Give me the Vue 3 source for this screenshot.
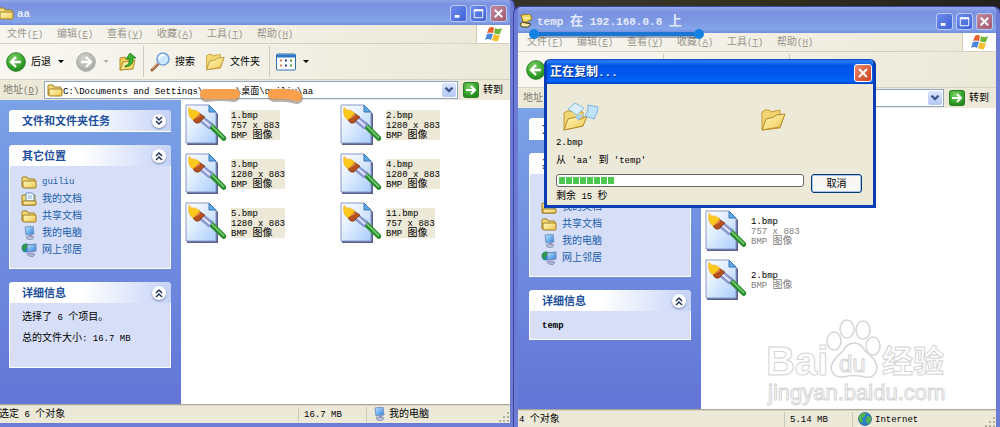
<template>
  <div class="desktop">
    <svg class="sprite" aria-hidden="true">
      <defs>
        <linearGradient id="gPage" x1="0" y1="0" x2="1" y2="1">
          <stop offset="0" stop-color="#ffffff" /><stop offset="0.4" stop-color="#e3effe" /><stop offset="1" stop-color="#a9cdfb" />
        </linearGradient>
        <linearGradient id="gFolder" x1="0" y1="0" x2="1" y2="1">
          <stop offset="0" stop-color="#fff9c0" /><stop offset="1" stop-color="#eec84e" />
        </linearGradient>
        <radialGradient id="gGreen" cx="0.4" cy="0.3" r="0.8">
          <stop offset="0" stop-color="#7fd26a" /><stop offset="0.6" stop-color="#36a32c" /><stop offset="1" stop-color="#1f7d1a" />
        </radialGradient>
        <radialGradient id="gGrey" cx="0.4" cy="0.3" r="0.8">
          <stop offset="0" stop-color="#d4d4d0" /><stop offset="1" stop-color="#a2a29e" />
        </radialGradient>
        <linearGradient id="gScreen" x1="0" y1="0" x2="1" y2="1">
          <stop offset="0" stop-color="#bfeaff" /><stop offset="1" stop-color="#2c7fe0" />
        </linearGradient>
      </defs>
      <symbol id="i-bmp" viewBox="0 0 42 42">
        <path d="M2 2H25L33 10V41H2Z" fill="#59608c" />
        <path d="M1 1H24L31 8V39H1Z" fill="url(#gPage)" stroke="#8798c6" />
        <path d="M24 1V8H31Z" fill="#5cabe8" stroke="#3d74b4" />
        <path d="M22 22L26 18L41 33Q42 37 38 37Z" fill="#2b8c2e" />
        <path d="M26 21L39 34" stroke="#7fd07a" stroke-width="1.5" />
        <path d="M14 17L19 13L28 20L24 25Z" fill="#8d9bd4" stroke="#6c76b4" stroke-width="0.5" />
        <path d="M17 15L25 22" stroke="#e6ebff" stroke-width="1.8" />
        <path d="M8 15L14 9L20 13L14 19Q9 20 8 15Z" fill="#b4501e" stroke="#6e2a0c" stroke-width="0.6" />
        <path d="M10 14L15 11" stroke="#e08a50" stroke-width="1.5" />
        <path d="M4 3Q6 7 10 6L15 9L8 16Q2 12 4 3Z" fill="#fbc81c" stroke="#e8a012" stroke-width="0.5" />
      </symbol>
      <symbol id="i-folder" viewBox="0 0 16 14">
        <path d="M1 12V3Q1 2 2 2H6L7 4H13Q14 4 14 5V12Z" fill="#f5dc7a" stroke="#a07c1e" />
        <path d="M3 6H15V12Q15 13 14 13H3Q2 13 2 12V7Q2 6 3 6Z" fill="url(#gFolder)" stroke="#a07c1e" />
      </symbol>
      <symbol id="i-docs" viewBox="0 0 16 14">
        <path d="M1 13V4Q1 3 2 3H14V13Z" fill="#f3d772" stroke="#a07c1e" />
        <path d="M5 1H11L13 3V9H5Z" fill="#f4faff" stroke="#6590bd" />
        <path d="M7 4H11M7 6H11" stroke="#86b0dc" />
        <path d="M2 9H15V13H2Z" fill="url(#gFolder)" stroke="#a07c1e" />
      </symbol>
      <symbol id="i-pc" viewBox="0 0 16 14">
        <path d="M4 1L12 0L13 8L5 9Z" fill="url(#gScreen)" stroke="#7c93bd" />
        <path d="M8 9L11 9L12 11L8 11Z" fill="#8b93b8" />
        <path d="M5 11Q9 9 13 11Q13 13 9 14Q5 13 5 11Z" fill="#b9bfdb" stroke="#7279a2" stroke-width="0.6" />
      </symbol>
      <symbol id="i-net" viewBox="0 0 16 14">
        <circle cx="5" cy="5" r="4.5" fill="#2f86d2" />
        <path d="M1 4Q3 0 7 1L6 4L4 6L5 9Q1 8 1 4Z" fill="#2d9a3a" />
        <path d="M6 2L15 1V8L7 9Z" fill="url(#gScreen)" stroke="#6e86b5" />
        <path d="M6 11Q10 9 14 11Q13 14 10 14Q7 13 6 11Z" fill="#b0b6d6" stroke="#6e759e" stroke-width="0.6" />
      </symbol>
      <symbol id="i-globe" viewBox="0 0 16 14">
        <circle cx="8" cy="7" r="6.5" fill="#2b7fcc" stroke="#1d4f7e" stroke-width="0.6" />
        <path d="M3 3Q6 0 9 1L8 4L5 6L6 9L4 11Q0 7 3 3ZM10 4L14 5Q15 9 11 12L9 9Z" fill="#56b24b" />
      </symbol>
      <symbol id="i-share" viewBox="0 0 16 14">
        <path d="M3 1L12 0L14 5L9 8H5Z" fill="#f6dc5c" stroke="#94701a" />
        <path d="M2 10Q4 7 8 9L13 10L10 13H4Z" fill="#fbe9a8" stroke="#4b3a10" />
        <path d="M5 4H12" stroke="#fff8c8" />
      </symbol>
      <symbol id="i-back" viewBox="0 0 20 20">
        <circle cx="10" cy="10" r="9.3" fill="url(#gGreen)" stroke="#2a8524" />
        <path d="M10 5L5 10L10 15M5 10H15" fill="none" stroke="#fff" stroke-width="2.4" />
      </symbol>
      <symbol id="i-next" viewBox="0 0 20 20">
        <circle cx="10" cy="10" r="9.3" fill="url(#gGrey)" stroke="#a8a8a4" />
        <path d="M10 5L15 10L10 15M15 10H5" fill="none" stroke="#fff" stroke-width="2.4" />
      </symbol>
      <symbol id="i-up" viewBox="0 0 18 20">
        <path d="M1 18V6L6 5L7 7L13 6V16Z" fill="#eccb5c" stroke="#b08c2c" />
        <path d="M1 18L4 10L16 8L14 17Z" fill="url(#gFolder)" stroke="#b08c2c" />
        <path d="M6 14Q11 13 10 7H7L11 1L17 6H14Q15 14 6 15Z" fill="#3bb131" stroke="#1f7c1b" stroke-width="0.8" />
      </symbol>
      <symbol id="i-search" viewBox="0 0 20 20">
        <path d="M2 18L9 11" stroke="#a0643c" stroke-width="3" stroke-linecap="round" />
        <path d="M2 17L8 11" stroke="#e8b68c" stroke-width="1" />
        <circle cx="13" cy="7" r="6" fill="#c9e8fc" stroke="#7aa4d8" stroke-width="1.6" />
        <path d="M9 7Q10 3 14 3" fill="none" stroke="#fff" stroke-width="1.8" />
      </symbol>
      <symbol id="i-open" viewBox="0 0 26 24">
        <path d="M2 22V4L5 2H9L11 4L20 2V8H24L20 20Z" fill="#f2d671" stroke="#c69a35" />
        <path d="M2 22L6 11L14 9L16 7L25 6L20 19Z" fill="url(#gFolder)" stroke="#b38a2a" />
      </symbol>
      <symbol id="i-copy" viewBox="0 0 36 30">
        <path d="M1 28V11L4 9L20 10V24Z" fill="#f2d671" stroke="#c69a35" />
        <path d="M1 28L5 17L13 15L16 18L24 14L20 24Z" fill="url(#gFolder)" stroke="#b38a2a" />
        <path d="M5 7L12 1L21 6L14 13Z" fill="#d9effc" stroke="#86bbdd" />
        <path d="M12 14L21 12L15 19Z" fill="#9fd1f3" />
        <path d="M25 3L35 5Q35 11 31 17L22 14Q26 9 25 3Z" fill="#bfe2f8" stroke="#7fb4dc" />
      </symbol>
      <symbol id="i-views" viewBox="0 0 20 17">
        <rect x="0.5" y="0.5" width="19" height="16" rx="1" fill="#fff" stroke="#2a6cae" />
        <path d="M1 1H19V4H1Z" fill="#2a77c4" />
        <path d="M4 6H6V8H4ZM4 11H6V13H4Z" fill="#d07a5a" />
        <path d="M9 6H11V8H9ZM9 11H11V13H9Z" fill="#2c3f9c" />
        <path d="M14 6H16V8H14ZM14 11H16V13H14Z" fill="#4b9a3c" />
      </symbol>
      <symbol id="i-flag" viewBox="0 0 18 16">
        <path d="M4 2Q7 0 9 2L8 7Q5 6 2 7Z" fill="#e8602c" />
        <path d="M10 2Q13 4 17 2L15 8Q12 9 9 7Z" fill="#74b63c" />
        <path d="M2 8Q5 7 8 8L6 14Q3 12 0 14Z" fill="#4a86dc" />
        <path d="M9 8Q12 10 15 9L13 15Q10 16 7 14Z" fill="#f6bf2c" />
      </symbol>
      <symbol id="i-go" viewBox="0 0 16 16">
        <rect x="0.5" y="0.5" width="15" height="15" rx="2" fill="url(#gGreen)" stroke="#2a7f26" />
        <path d="M8 4L12 8L8 12M12 8H3" fill="none" stroke="#fff" stroke-width="2" />
      </symbol>
    </svg>

    <section v-for="w in windows" :key="w.id" class="window" :class="w.id">
      <header class="titlebar">
        <svg class="ico"><use :href="w.icon" /></svg>
        <h1 class="caption"><T :text="w.title" /></h1>
        <button class="ctl" aria-label="最小化"><svg viewBox="0 0 16 16"><path d="M4 11H9" stroke="#fff" stroke-width="3" /></svg></button>
        <button class="ctl" aria-label="最大化"><svg viewBox="0 0 16 16"><path d="M3.500 4.500H12.500V12.500H3.500Z" fill="none" stroke="#fff" /><path d="M3 4.500H13" stroke="#fff" stroke-width="2" /></svg></button>
        <button class="ctl close" aria-label="关闭"><svg viewBox="0 0 16 16"><path d="M4 4L12 12M12 4L4 12" stroke="#fff" stroke-width="2" /></svg></button>
      </header>

      <nav class="menubar">
        <button v-for="m in menus" :key="m.key" class="menu">{{ m.label }}<span class="key">(<u>{{ m.key }}</u>)</span></button>
        <span class="flag"><svg><use href="#i-flag" /></svg></span>
      </nav>

      <div class="toolbar">
        <button class="tool"><svg class="round"><use href="#i-back" /></svg>后退</button>
        <span class="caret"></span>
        <button class="tool next" aria-label="前进"><svg class="round"><use href="#i-next" /></svg></button>
        <span class="caret dim"></span>
        <button class="tool up" aria-label="向上"><svg class="upico"><use href="#i-up" /></svg></button>
        <span class="sep"></span>
        <button class="tool"><svg class="round"><use href="#i-search" /></svg>搜索</button>
        <button class="tool folders"><svg class="round"><use href="#i-open" /></svg>文件夹</button>
        <span class="sep"></span>
        <button class="tool" aria-label="查看"><svg class="round"><use href="#i-views" /></svg></button>
        <span class="caret"></span>
      </div>

      <div class="address">
        <label class="addr-label" :for="w.id + '-addr'">地址<span class="key">(<u>D</u>)</span></label>
        <div class="combo">
          <svg class="ico"><use href="#i-folder" /></svg>
          <input :id="w.id + '-addr'" v-model="w.path" type="text" spellcheck="false">
          <button class="drop" aria-label="展开"><svg viewBox="0 0 12 12"><path d="M3 4L6 7L9 4" fill="none" stroke="#3c5a8c" stroke-width="2" /></svg></button>
          <svg v-if="w.id === 'source'" class="marker" viewBox="0 0 112 18">
            <g fill="none" stroke-linecap="round" stroke-linejoin="round">
              <path d="M8 10Q24 8 36 10M76 10Q90 9 99 12" stroke="#8a7a6a" stroke-width="12" opacity="0.6" />
              <path d="M7 8Q22 8 37 8M75 8Q90 7 99 10" stroke="#f8a04c" stroke-width="10" />
            </g>
          </svg>
        </div>
        <button class="go"><svg><use href="#i-go" /></svg>转到</button>
      </div>

      <div class="content">
        <aside class="sidebar">
          <section class="panel">
            <h2>文件和文件夹任务<button class="chev" aria-label="展开"><svg viewBox="0 0 14 14"><path d="M4 3L7 6L10 3M4 7L7 10L10 7" /></svg></button></h2>
          </section>
          <section class="panel">
            <h2>其它位置<button class="chev" aria-label="收起"><svg viewBox="0 0 14 14"><path d="M4 7L7 4L10 7M4 11L7 8L10 11" /></svg></button></h2>
            <ul class="places">
              <li v-for="p in w.places" :key="p.name">
                <a href="#"><svg class="ico"><use :href="p.icon" /></svg><T :text="p.name" /></a>
              </li>
            </ul>
          </section>
          <section class="panel">
            <h2>详细信息<button class="chev" aria-label="收起"><svg viewBox="0 0 14 14"><path d="M4 7L7 4L10 7M4 11L7 8L10 11" /></svg></button></h2>
            <div class="details">
              <p v-for="d in w.details" :key="d"><T :text="d" /></p>
            </div>
          </section>
        </aside>
        <ul class="files">
          <li v-for="f in w.files" :key="f.name" class="file">
            <svg class="bmp"><use href="#i-bmp" /></svg>
            <div class="meta">
              <p class="name"><T :text="f.name" /></p>
              <p v-if="f.size"><T :text="f.size" /></p>
              <p><T text="BMP 图像" /></p>
            </div>
          </li>
        </ul>
      </div>

      <footer class="status">
        <span class="pane grow"><T :text="w.status" /></span>
        <span class="pane total"><T :text="w.total" /></span>
        <span class="pane zone"><svg class="ico"><use :href="w.zoneIcon" /></svg><T :text="w.zone" /></span>
        <svg class="grip" viewBox="0 0 12 12"><path d="M9 2h2M9 6h2M5 6h2M9 10h2M5 10h2M1 10h2" stroke="#b4b09c" stroke-width="2" /></svg>
      </footer>
    </section>

    <svg class="underline" viewBox="0 0 178 16">
      <path d="M6 9H172" stroke="#4a5c84" stroke-width="4" opacity="0.5" />
      <path d="M6 7H172" stroke="#1a76d2" stroke-width="4" />
      <circle cx="6" cy="7" r="5" fill="#1583e4" />
      <circle cx="171" cy="7" r="5" fill="#1583e4" />
    </svg>

    <section class="dialog" role="dialog" aria-labelledby="copy-title">
      <header class="dialog-title">
        <h1 id="copy-title"><T text="正在复制..." /></h1>
        <button class="ctl close" aria-label="关闭"><svg viewBox="0 0 16 16"><path d="M4 4L12 12M12 4L4 12" stroke="#fff" stroke-width="2" /></svg></button>
      </header>
      <div class="dialog-body">
        <div class="flight">
          <svg class="copy"><use href="#i-copy" /></svg>
          <svg class="dest"><use href="#i-open" /></svg>
        </div>
        <p><T text="2.bmp" /></p>
        <p class="route"><T text="从 'aa' 到 'temp'" /></p>
        <div class="run">
          <div class="progress-col">
            <div class="progress" role="progressbar" :aria-valuenow="progress" aria-label="复制进度">
              <div class="blocks" :style="{ width: progress + '%' }"></div>
            </div>
            <p><T text="剩余 15 秒" /></p>
          </div>
          <button class="cancel">取消</button>
        </div>
      </div>
    </section>

    <svg class="watermark" viewBox="0 0 190 90" aria-hidden="true">
      <g fill="#fff" stroke="#d4d4d4" stroke-width="1.500">
        <ellipse cx="71" cy="31" rx="7" ry="9" />
        <ellipse cx="84" cy="19" rx="7" ry="9" />
        <ellipse cx="100" cy="20" rx="7" ry="9" />
        <ellipse cx="110" cy="36" rx="7" ry="9" />
        <path d="M91 33Q98 33 102 41Q113 49 114 57Q113 69 102 67Q91 64 80 67Q69 68 68 57Q70 49 80 41Q84 33 91 33Z" />
        <text class="wm-logo" x="3" y="65">Bai</text>
        <text class="wm-du" x="76" y="62">du</text>
        <text class="wm-cn" x="119" y="62">经验</text>
        <text class="wm-url" x="5" y="90">jingyan.baidu.com</text>
      </g>
    </svg>
  </div>
</template>

<script setup>
import { h, reactive, ref } from 'vue'

// Latin runs use a smaller monospaced face than the Chinese text around them
const T = (props) => h('span', { class: 'run-text' }, props.text
  .split(/([\x20-\x7e]+)/)
  .filter(Boolean)
  .map((part) => (/[\x20-\x7e]/.test(part) ? h('span', { class: 'lat' }, part) : part)))
T.props = ['text']

const menus = [
  { label: '文件', key: 'F' },
  { label: '编辑', key: 'E' },
  { label: '查看', key: 'V' },
  { label: '收藏', key: 'A' },
  { label: '工具', key: 'T' },
  { label: '帮助', key: 'H' }
]

const commonPlaces = [
  { name: '我的文档', icon: '#i-docs' },
  { name: '共享文档', icon: '#i-folder' },
  { name: '我的电脑', icon: '#i-pc' },
  { name: '网上邻居', icon: '#i-net' }
]

const windows = reactive([
  {
    id: 'source',
    title: 'aa',
    icon: '#i-folder',
    path: 'C:\\Documents and Settings\\      \\桌面\\guiliu\\aa',
    places: [{ name: 'guiliu', icon: '#i-folder' }, ...commonPlaces],
    details: ['选择了 6 个项目。', '总的文件大小: 16.7 MB'],
    files: [
      { name: '1.bmp', size: '757 x 883' },
      { name: '2.bmp', size: '1280 x 883' },
      { name: '3.bmp', size: '1280 x 883' },
      { name: '4.bmp', size: '1280 x 883' },
      { name: '5.bmp', size: '1280 x 883' },
      { name: '11.bmp', size: '757 x 883' }
    ],
    status: '选定 6 个对象',
    total: '16.7 MB',
    zone: '我的电脑',
    zoneIcon: '#i-pc'
  },
  {
    id: 'target',
    title: 'temp 在 192.168.0.8 上',
    icon: '#i-share',
    path: '',
    places: commonPlaces,
    details: ['temp'],
    files: [
      { name: '1.bmp', size: '757 x 883' },
      { name: '2.bmp' }
    ],
    status: '4 个对象',
    total: '5.14 MB',
    zone: 'Internet',
    zoneIcon: '#i-globe'
  }
])

const progress = ref(23)
</script>

<style>
body { margin: 0; background: #25231c; }
.lat { font-family: "Liberation Mono", monospace; font-size: 9px; white-space: pre; }
</style>

<style scoped>
.desktop {
  position: relative;
  display: grid;
  grid-template-columns: 514fr 486fr;
  height: 100vh;
  min-height: 420px;
  overflow: hidden;
  background: linear-gradient(90deg, #25231c, #3a352a 60%, #33301f 75%, #22211d);
  font-family: "Liberation Sans", "Noto Sans CJK SC", sans-serif;
  font-size: 10px;
  line-height: 12px;
  color: #000;
}
.desktop * { box-sizing: border-box; }
h1, h2, p, ul { margin: 0; padding: 0; font-weight: normal; font-size: inherit; list-style: none; }
button { margin: 0; padding: 0; border: 0; background: none; font: inherit; color: inherit; }
svg { display: block; flex: none; }
.sprite { position: absolute; width: 0; height: 0; }
.ico { width: 16px; height: 14px; }

.window {
  display: flex;
  flex-direction: column;
  min-width: 0;
  border: 4px solid #6c7bd4;
  border-top: 0;
  border-radius: 7px 7px 0 0;
  background: #ece9d8;
  box-shadow: 0 0 0 1px #3a449e;
  overflow: hidden;
}
.source { margin: -1px 0 0 -6px; }
.target { margin: 7px 0 -5px; }

.titlebar {
  display: flex;
  align-items: center;
  gap: 3px;
  flex: none;
  height: 26px;
  margin: 0 -4px;
  padding: 2px 7px 0 4px;
  background: linear-gradient(#93a9ec 0, #7b92e0 20%, #7d98e2 55%, #84a5ea 85%, #748cdc 100%);
}
.caption { flex: 1; color: #e4eafc; font-size: 13px; font-weight: bold; }
.caption :deep(.lat) { font-size: 11px; }
.caption, .dialog-title h1 { line-height: 16px; white-space: nowrap; }
.ctl {
  width: 17px;
  height: 17px;
  border: 1px solid #bccbf6;
  border-radius: 3px;
  background: linear-gradient(135deg, #6d8cea, #3f61d8);
}
.ctl svg { width: 15px; height: 15px; }
.ctl.close { background: linear-gradient(135deg, #c08a9c, #a35a70); }

.menubar {
  display: flex;
  flex: none;
  height: 19px;
  padding-left: 9px;
  gap: 14px;
  color: #97948a;
  background: linear-gradient(90deg, #f6f5f0, #ece9d8);
  border-bottom: 1px solid #d6d2c2;
}
.menu { white-space: nowrap; width: 36px; text-align: left; }
.key { font-family: "Liberation Mono", monospace; font-size: 9px; }
.flag {
  display: flex;
  align-items: center;
  justify-content: center;
  width: 34px;
  margin-left: auto;
  background: #fff;
  border-left: 1px solid #cfcbbb;
}
.flag svg { width: 18px; height: 16px; }

.toolbar {
  display: flex;
  align-items: center;
  flex: none;
  height: 36px;
  padding-left: 8px;
  background: linear-gradient(90deg, #f8f7f2, #ece9d8);
  border-bottom: 1px solid #d6d2c2;
}
.tool { display: flex; align-items: center; gap: 5px; white-space: nowrap; }
.round { width: 20px; height: 20px; }
.upico { width: 18px; height: 20px; }
.caret { border: 3px solid transparent; border-top-color: #000; border-bottom: 0; }
.caret.dim { border-top-color: #b8b5a8; }
.tool + .caret { margin-left: 7px; }
.next { margin-left: 12px; }
.up { margin-left: 10px; }
.sep { width: 1px; height: 31px; margin: 0 6px; background: #cfcbbb; }
.folders { margin: 0 3px 0 10px; }

.address {
  display: flex;
  align-items: center;
  flex: none;
  height: 20px;
  padding: 0 7px 0 5px;
  gap: 5px;
}
.addr-label { color: #7e7b72; width: 36px; white-space: nowrap; }
.combo {
  position: relative;
  display: flex;
  align-items: center;
  flex: 1;
  min-width: 0;
  height: 18px;
  padding: 1px 1px 1px 2px;
  background: #fff;
  border: 1px solid #8fa5c4;
}
.combo input {
  flex: 1;
  min-width: 0;
  padding: 0;
  border: 0;
  outline: 0;
  background: none;
  font: 9px "Liberation Mono", "Noto Sans CJK SC", monospace;
}
.drop { width: 14px; height: 14px; border-radius: 2px; background: linear-gradient(#dbe6fd, #b5c8f5); }
.drop svg { width: 14px; height: 14px; }
.marker { position: absolute; left: 153px; top: 4px; width: 112px; height: 18px; }
.go { display: flex; align-items: center; gap: 4px; white-space: nowrap; }
.go svg { width: 16px; height: 16px; }

.content { display: flex; flex: 1; min-height: 0; background: #fff; }
.sidebar {
  flex: none;
  display: flex;
  flex-direction: column;
  gap: 13px;
  width: 183px;
  padding: 10px 10px 0 11px;
  background: linear-gradient(#7ba2e7, #6375d6);
}
.panel { background: #d6dff7; border: 1px solid #fff; border-top: 0; border-radius: 4px 4px 0 0; }
.panel h2 {
  display: flex;
  align-items: center;
  justify-content: space-between;
  height: 21px;
  margin: 0 -1px;
  padding: 0 5px 0 13px;
  border-radius: 4px 4px 0 0;
  background: linear-gradient(90deg, #fff 45%, #c6d3f7);
  color: #1d4f9c;
  font-size: 11px;
  font-weight: bold;
}
.chev { width: 14px; height: 14px; border-radius: 50%; background: #fff; box-shadow: 0 1px 2px #7886ac; }
.chev svg { width: 14px; height: 14px; fill: none; stroke: #20355c; stroke-width: 1.5; }
.places { padding: 7px 11px 10px; }
.target .places { padding-top: 24px; }
.places a { display: flex; align-items: center; gap: 5px; height: 17px; color: #215dab; text-decoration: none; }
.details { padding: 3px 12px 19px; }
.details p { height: 21px; line-height: 21px; white-space: nowrap; }
.target .details { padding-bottom: 4px; }
.target .details p { font-weight: bold; }

.files {
  display: grid;
  grid-template-columns: 155px 155px;
  grid-auto-rows: 42px;
  row-gap: 7px;
  align-content: start;
  padding: 4px 0 0 4px;
}
.target .files { grid-template-columns: 155px; padding-top: 102px; }
.file { display: flex; align-items: flex-start; gap: 4px; }
.bmp { width: 42px; height: 42px; }
.meta { align-self: center; line-height: 10px; white-space: nowrap; }
.source .meta { background: #ece9d8; }
.meta p { height: 10px; }
.target .meta p { color: #808080; }
.target .meta .name { color: #000; }

.status {
  display: flex;
  align-items: center;
  flex: none;
  height: 19px;
  border-top: 1px solid #aca899;
  box-shadow: inset 0 1px 0 #d8d4c4;
  position: relative;
}
.pane { display: flex; align-items: center; height: 15px; white-space: nowrap; }
.grow { flex: 1; padding-left: 1px; }
.total { width: 68px; padding-left: 5px; border-left: 1px solid #cdc9b8; }
.zone { width: 144px; padding-left: 4px; gap: 2px; border-left: 1px solid #cdc9b8; }
.grip { position: absolute; right: 0; bottom: 0; width: 12px; height: 12px; }

.underline { position: absolute; left: 528px; top: 27px; width: 178px; height: 16px; }

.dialog {
  position: absolute;
  left: 544px;
  top: 59px;
  width: 332px;
  border: 3px solid #0a3cb4;
  border-top: 0;
  border-radius: 6px 6px 0 0;
  background: #ece9d8;
  overflow: hidden;
}
.dialog-title {
  display: flex;
  align-items: center;
  justify-content: space-between;
  height: 25px;
  margin: 0 -3px;
  padding: 2px 4px 0 6px;
  background: linear-gradient(#0a3fc4 0, #2b80f8 8%, #0055e6 25%, #0058f0 60%, #0264fa 88%, #0142c4 100%);
  color: #fff;
}
.dialog-title h1 { font-size: 12px; font-weight: bold; text-shadow: 1px 1px #0a2f8c; }
.dialog-title :deep(.lat) { font-size: 11px; }
.dialog .ctl { width: 18px; height: 18px; border-color: #fff; }
.dialog .ctl svg { width: 16px; height: 16px; }
.dialog .close { background: linear-gradient(135deg, #ec8a6c, #cf3f1c); }
.dialog-body { padding: 19px 11px 2px 9px; }
.flight { display: flex; align-items: flex-end; gap: 161px; height: 33px; padding: 0 0 4px 7px; }
.copy { width: 36px; height: 30px; }
.dest { width: 26px; height: 24px; }
.route { margin-top: 5px; }
.run { display: flex; align-items: flex-start; gap: 7px; margin-top: 7px; }
.progress-col { flex: 1; }
.progress { height: 13px; margin-bottom: 3px; padding: 2px; border: 1px solid #686868; border-radius: 3px; background: #fff; }
.blocks { height: 7px; background: repeating-linear-gradient(90deg, #4bc94f 0, #4bc94f 6px, #fff 6px, #fff 7px); }
.cancel { width: 51px; height: 19px; border: 1px solid #003c74; border-radius: 3px; background: #f8f7f3; box-shadow: inset 0 0 0 1px #a9c3ee; }

.watermark { position: absolute; right: 47px; bottom: 27px; width: 190px; height: 90px; overflow: visible; }
.watermark text { font-family: "Liberation Sans", "Noto Sans CJK SC", sans-serif; font-weight: bold; stroke-width: 1; }
.watermark .wm-logo { font-size: 40px; }
.watermark .wm-du { font-size: 24px; font-weight: normal; }
.watermark .wm-cn { font-size: 31px; }
.watermark .wm-url { font-size: 22px; font-weight: normal; }
</style>
